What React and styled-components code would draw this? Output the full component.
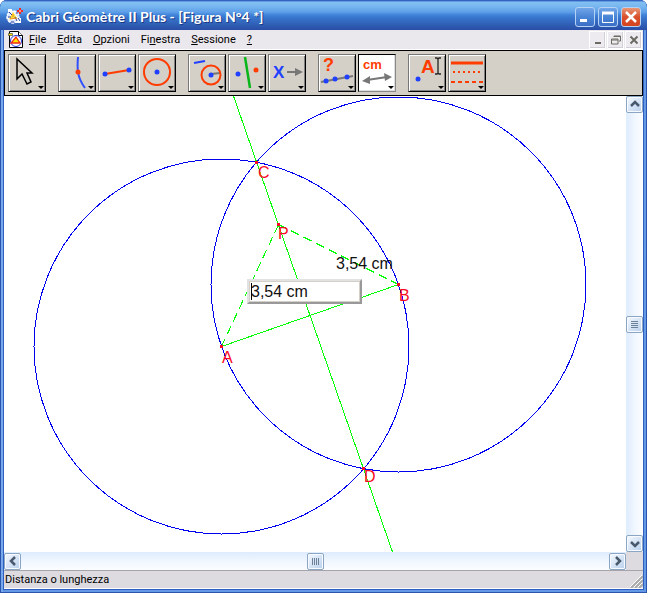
import React, { useState } from "react";
import styled, { createGlobalStyle, css } from "styled-components";

const GlobalStyle = createGlobalStyle`
  * {
    box-sizing: border-box;
  }
  body {
    margin: 0;
    background: #fff;
    font-family: Roboto, "DejaVu Sans Condensed", sans-serif;
  }
  button {
    padding: 0;
    font: inherit;
  }
  svg {
    display: block;
  }
`;

const Window = styled.div`
  display: flex;
  flex-direction: column;
  height: calc(100vh - 7px);
  min-height: 300px;
  padding: 0 4px 4px;
  border-radius: 7px 7px 0 0;
  background: #2f5fc0;
  box-shadow: inset 1px 0 #2a55ae, inset -1px 0 #2a55ae, inset 0 -1px #2a55ae,
    inset 3px 0 #78a8ec, inset -3px 0 #6298e4, inset 0 -3px #6298e4;
  overflow: hidden;
`;

const TitleBar = styled.header`
  display: flex;
  align-items: center;
  flex: none;
  height: 30px;
  margin: 0 -4px;
  padding: 3px 6px 0;
  border-radius: 7px 7px 0 0;
  background: linear-gradient(#2c4fb0 0, #3e76cf 1px, #83bff2 2px, #79b8f0 6px, #5e9fe8 12px, #3f83d8 15px, #3874cc 18px, #2d57ae 27px, #2a4ea8 30px);
`;

const Title = styled.h1`
  flex: 1;
  margin: 0;
  padding-left: 3px;
  color: #fff;
  font: bold 14px/20px Lato, "Noto Sans", sans-serif;
  text-shadow: 1px 1px #1c3a86;
  white-space: nowrap;
  overflow: hidden;
`;

const Caption = styled.div`
  display: flex;
  gap: 3px;
`;

const CaptionButton = styled.button`
  display: grid;
  place-items: center;
  width: 20px;
  height: 20px;
  border: 1px solid #b4d2f4;
  border-radius: 3px;
  background: ${(p) => p.$close
    ? "linear-gradient(#e99878, #d9502c 50%, #d4441f)"
    : "linear-gradient(#71a5e8, #4a85d6 50%, #3a6fc6)"};
`;

const MenuBar = styled.nav`
  display: flex;
  align-items: center;
  flex: none;
  height: 20px;
  padding: 0 0 0 4px;
  background: #ebe8ed;
  border-bottom: 1px solid #fff;
`;

const MenuItems = styled.div`
  display: flex;
  flex: 1;
  gap: 11px;
  padding-left: 5px;
`;

const MenuItem = styled.button`
  border: 0;
  background: transparent;
  color: #000;
  font-size: 11px;
  line-height: 16px;
`;

const DocButton = styled.button`
  display: grid;
  place-items: center;
  width: 17px;
  height: 18px;
  margin-right: 1px;
  border: 1px solid #fff;
  background: #edebef;
  box-shadow: inset -1px -1px #d2d0d6;
`;

const Toolbar = styled.div`
  display: flex;
  flex: none;
  gap: 12px;
  height: 46px;
  padding: 3px;
  border: 1px solid #000;
  background: #d4d0c8;
`;

const ToolGroup = styled.div`
  display: flex;
  gap: 2px;
`;

const Tool = styled.button`
  width: 38px;
  height: 38px;
  border: 1px solid #777;
  background: #d4d0c8;
  box-shadow: inset 1px 1px #fff, inset -1px -1px #808080;
  border-right-color: #000;
  border-bottom-color: #000;
  ${(p) => p.$active && css`
    border-color: #000 #888 #888 #000;
    background: #fff;
    box-shadow: inset -1px -1px #ddd;
  `}
`;

const Workspace = styled.div`
  display: grid;
  grid-template-columns: minmax(0, 1fr) 17px;
  grid-template-rows: minmax(0, 1fr) 18px;
  flex: 1;
  min-height: 0;
  background: #dddbe0;
`;

const Sheet = styled.main`
  position: relative;
  overflow: hidden;
  background: #fff;
`;

const Figure = styled.svg`
  text {
    font: 16px "Liberation Sans", Arial, sans-serif;
  }
`;

const Measure = styled.input`
  position: absolute;
  left: 243px;
  top: 183px;
  width: 115px;
  height: 25px;
  padding: 0 0 0 2px;
  border: 2px solid;
  border-color: #e2e2e2 #999 #999 #e2e2e2;
  outline: 1px solid #d4d0c8;
  outline-offset: -3px;
  background: #fff;
  color: #111;
  font: 16px "Liberation Sans", Arial, sans-serif;
`;

const Caret = styled.span`
  position: absolute;
  left: 247px;
  top: 187px;
  width: 1px;
  height: 17px;
  background: #000;
`;

const ScrollTrack = styled.div`
  display: flex;
  flex-direction: ${(p) => (p.$vertical ? "column" : "row")};
  align-items: center;
  justify-content: space-between;
  background: linear-gradient(${(p) => (p.$vertical ? "90deg" : "180deg")}, #deecfd, #f3f8ff 60%, #fbfdff);
`;

const ScrollButton = styled.button`
  display: grid;
  place-items: center;
  width: 17px;
  height: 17px;
  border: 1px solid #8aa6c4;
  border-radius: 2px;
  background: linear-gradient(135deg, #f5f9ff, #b9d0ec);
  box-shadow: inset 0 0 0 1px #f7faff;
`;

const StatusBar = styled.footer`
  display: flex;
  justify-content: space-between;
  align-items: end;
  flex: none;
  height: 19px;
  border-top: 1px solid #a6a4aa;
  border-bottom: 1px solid #fff;
  background: #dddbe0;
  color: #000;
  font-size: 11px;
  line-height: 16px;
  padding-left: 1px;
`;

function AppIcon() {
  return (
    <svg width="17" height="17" viewBox="0 0 17 17" aria-hidden="true">
      <circle cx="7" cy="9" r="6" fill="#d8e4ff" stroke="#fff" strokeWidth="1.500" strokeDasharray="3 1" />
      <path d="M10 10h5v5h-5zM2 1h4v3H2z" fill="#fff" />
      <path d="M7 3l5 8-10 1z" fill="#f7dc35" stroke="#fff" />
      <path d="M3 4l3 3M2 9h3M9 9l2 4M5 14h3M12 10l2 3M10 5h2" stroke="#283c9c" />
      <path d="M4 11l7-1M7 6v3" stroke="#f08a2a" />
      <path d="M11 3h6M14 0v6" stroke="#ef2b23" strokeWidth="2" />
      <path d="M13 3h2" stroke="#fff" />
    </svg>
  );
}

function DocumentIcon() {
  return (
    <svg width="16" height="17" viewBox="0 0 16 17" aria-hidden="true">
      <path d="M1.500 .5h9l4 4v12h-13z" fill="#fff" stroke="#000" />
      <path d="M10.500 .5v4h4" fill="#fff" stroke="#000" />
      <circle cx="8" cy="10" r="5.500" fill="none" stroke="#2438d8" />
      <path d="M8 6l4 6H3z" fill="#ffe500" stroke="#ee2a16" strokeWidth="1.300" />
      <path d="M.5 2.500h4v2h-4z" fill="#ffe500" stroke="#333" strokeWidth=".6" />
    </svg>
  );
}

const blue = "#2040ff";
const red = "#ff3c00";

const drawings = {
  pointer: <path d="M9 5v20l5-5 5 10 4-2-4-9h5z" fill="#d4d0c8" stroke="#000" strokeWidth="1.500" />,
  point: <><path d="M20 3c-1 12-1 20 7 31" fill="none" stroke="#3050ff" strokeWidth="2" /><circle cx="20" cy="18" r="2.500" fill={red} /></>,
  segment: <><path d="M7 20l24-4" stroke={red} strokeWidth="2" /><circle cx="7" cy="20" r="2.500" fill={blue} /><circle cx="31" cy="16" r="2.500" fill={blue} /></>,
  circle: <><circle cx="19" cy="18" r="13" fill="none" stroke={red} strokeWidth="2" /><circle cx="19" cy="18" r="2.500" fill={blue} /></>,
  compass: <><path d="M6 9l11-2" stroke={blue} strokeWidth="2" /><path d="M23 20l9-1" stroke="#777" strokeWidth="2" /><circle cx="23" cy="21" r="9.500" fill="none" stroke={red} strokeWidth="2" /><circle cx="23" cy="21" r="2.500" fill={blue} /></>,
  bisector: <><path d="M17 3l5 31" stroke="#09b51a" strokeWidth="2.500" /><circle cx="10" cy="20" r="2.500" fill={blue} /><circle cx="28" cy="16" r="2.500" fill={red} /></>,
  transform: <><text x="5" y="24" fill={blue} fontFamily="Liberation Sans" fontSize="17" fontWeight="bold">X</text><path d="M19 18h9" stroke="#777" strokeWidth="2" /><path d="M27 14v8l8-4z" fill="#777" /></>,
  query: <><text x="5" y="17" fill={red} fontFamily="Liberation Sans" fontSize="18" fontWeight="bold">?</text><path d="M3 28l32-6" stroke="#777" strokeWidth="2" /><circle cx="8" cy="27" r="2.500" fill={blue} /><circle cx="17" cy="25" r="2.500" fill={blue} /><circle cx="29" cy="23" r="2.500" fill={blue} /></>,
  measure: <><text x="5" y="15" fill={red} fontFamily="Liberation Sans" fontSize="13" fontWeight="bold">cm</text><path d="M9 26l20-3" stroke="#777" strokeWidth="2" /><path d="M12 22v8l-8-3zM26 19l1 8 7-4z" fill="#777" /></>,
  label: <><text x="13" y="19" fill={red} fontFamily="Liberation Sans" fontSize="19" fontWeight="bold">A</text><circle cx="10" cy="25" r="2.500" fill={blue} /><path d="M27 4h2l1 1 1-1h2M30 5v14M27 20h2l1-1 1 1h2" fill="none" stroke="#222" strokeWidth="1.300" /></>,
  lines: <><path d="M3 9h32" stroke={red} strokeWidth="3" /><path d="M5 18h30" stroke={red} strokeWidth="2" strokeDasharray="2 3" /><path d="M3 28h32" stroke={red} strokeWidth="2" strokeDasharray="4 3" /></>,
};

const toolGroups = [
  [["pointer", "Puntatore"]],
  [["point", "Punti"], ["segment", "Linee"], ["circle", "Curve"]],
  [["compass", "Costruzioni"], ["bisector", "Asse"], ["transform", "Trasformazioni"]],
  [["query", "Proprietà"], ["measure", "Misure"]],
  [["label", "Testo"], ["lines", "Attributi"]],
];

const menus = [["", "F", "ile"], ["", "E", "dita"], ["", "O", "pzioni"], ["Fi", "n", "estra"], ["", "S", "essione"], ["", "?", ""]];

const arrows = {
  up: "M1 6l4-4 4 4",
  down: "M1 3l4 4 4-4",
  left: "M7 1L3 5l4 4",
  right: "M3 1l4 4-4 4",
};

function Arrow({ direction }) {
  return (
    <ScrollButton aria-label={direction}>
      <svg width="10" height="10" viewBox="0 0 10 10"><path d={arrows[direction]} fill="none" stroke="#49596e" strokeWidth="2.500" /></svg>
    </ScrollButton>
  );
}

function Thumb({ vertical }) {
  return (
    <ScrollButton aria-label="scroll">
      <svg width="9" height="9" viewBox="0 0 9 9">
        <path d={vertical ? "M1 1.500h7M1 3.500h7M1 5.500h7M1 7.500h7" : "M1.500 1v7M3.500 1v7M5.500 1v7M7.500 1v7"} stroke="#6b8099" />
      </svg>
    </ScrollButton>
  );
}

const points = [
  { name: "C", x: 252, y: 66, tx: 254, ty: 82 },
  { name: "P", x: 274, y: 128, tx: 274, ty: 143 },
  { name: "B", x: 394, y: 188, tx: 395, ty: 205 },
  { name: "A", x: 217, y: 250, tx: 218, ty: 267 },
  { name: "D", x: 359, y: 372, tx: 360, ty: 386 },
];

function App() {
  const [active, setActive] = useState("measure");
  const [value, setValue] = useState("3,54 cm");

  return (
    <>
      <GlobalStyle />
      <Window>
        <TitleBar>
          <AppIcon />
          <Title>Cabri Géomètre II Plus - [Figura N°4 *]</Title>
          <Caption>
            <CaptionButton aria-label="Riduci a icona"><svg width="12" height="12"><path d="M1 9.500h7" stroke="#fff" strokeWidth="3" /></svg></CaptionButton>
            <CaptionButton aria-label="Ingrandisci"><svg width="12" height="12"><path d="M0 2h12" stroke="#fff" strokeWidth="3" /><path d="M.5 1v10.500h11V1" fill="none" stroke="#fff" /></svg></CaptionButton>
            <CaptionButton $close aria-label="Chiudi"><svg width="12" height="12"><path d="M1 1l10 10M11 1L1 11" stroke="#fff" strokeWidth="2.500" /></svg></CaptionButton>
          </Caption>
        </TitleBar>
        <MenuBar>
          <DocumentIcon />
          <MenuItems>
            {menus.map(([before, key, after]) => (
              <MenuItem key={before + key}>{before}<u>{key}</u>{after}</MenuItem>
            ))}
          </MenuItems>
          <DocButton aria-label="Riduci figura"><svg width="10" height="10"><path d="M2 8h6" stroke="#6b6b63" strokeWidth="2" /></svg></DocButton>
          <DocButton aria-label="Ripristina figura"><svg width="10" height="10"><path d="M3 2V1h6.500v5H8M.5 4h6.500v5H.5zM.5 5H7M3 1.500h6" fill="none" stroke="#6b6b63" /></svg></DocButton>
          <DocButton aria-label="Chiudi figura"><svg width="10" height="10"><path d="M1.500 1.500l7 7M8.500 1.500l-7 7" stroke="#6b6b63" strokeWidth="2" /></svg></DocButton>
        </MenuBar>
        <Toolbar>
          {toolGroups.map((group) => (
            <ToolGroup key={group[0][0]}>
              {group.map(([id, label]) => (
                <Tool key={id} $active={active === id} aria-label={label} onClick={() => setActive(id)}>
                  <svg width="36" height="36" viewBox="1 1 36 36">
                    {drawings[id]}
                    <path d="M30 32h6l-3 3z" fill="#000" />
                  </svg>
                </Tool>
              ))}
            </ToolGroup>
          ))}
        </Toolbar>
        <Workspace>
          <Sheet>
            <Figure width="622" height="456" viewBox="0 0 622 456">
              <g fill="none" shapeRendering="crispEdges">
                <circle cx="217.500" cy="250.500" r="187.500" stroke="#0000f0" />
                <circle cx="394.500" cy="188.500" r="187.500" stroke="#0000f0" />
                <path d="M229.500 0L388.500 456M217.500 250.500L394.500 188.500" stroke="#00ff00" />
                <path d="M274.500 128.500L217.500 250.500M274.500 128.500L394.500 188.500" stroke="#00ff00" strokeDasharray="9 5" />
              </g>
              {points.map((p) => (
                <g key={p.name} fill="#fa0824">
                  <rect x={p.x - 1} y={p.y - 1} width="3" height="3" />
                  <text x={p.tx} y={p.ty}>{p.name}</text>
                </g>
              ))}
              <text x="332" y="173" fill="#111">3,54 cm</text>
            </Figure>
            <Measure aria-label="Distanza" value={value} onChange={(e) => setValue(e.target.value)} />
            <Caret />
          </Sheet>
          <ScrollTrack $vertical>
            <Arrow direction="up" />
            <Thumb vertical />
            <Arrow direction="down" />
          </ScrollTrack>
          <ScrollTrack>
            <Arrow direction="left" />
            <Thumb />
            <Arrow direction="right" />
          </ScrollTrack>
        </Workspace>
        <StatusBar>
          <span>Distanza o lunghezza</span>
          <svg width="13" height="13"><path d="M1 13L13 1M5 13l8-8M9 13l4-4" stroke="#aaa" strokeWidth="2" /><path d="M0 12L12 0M4 12l8-8M8 12l4-4" stroke="#fff" /></svg>
        </StatusBar>
      </Window>
    </>
  );
}

export default App;
